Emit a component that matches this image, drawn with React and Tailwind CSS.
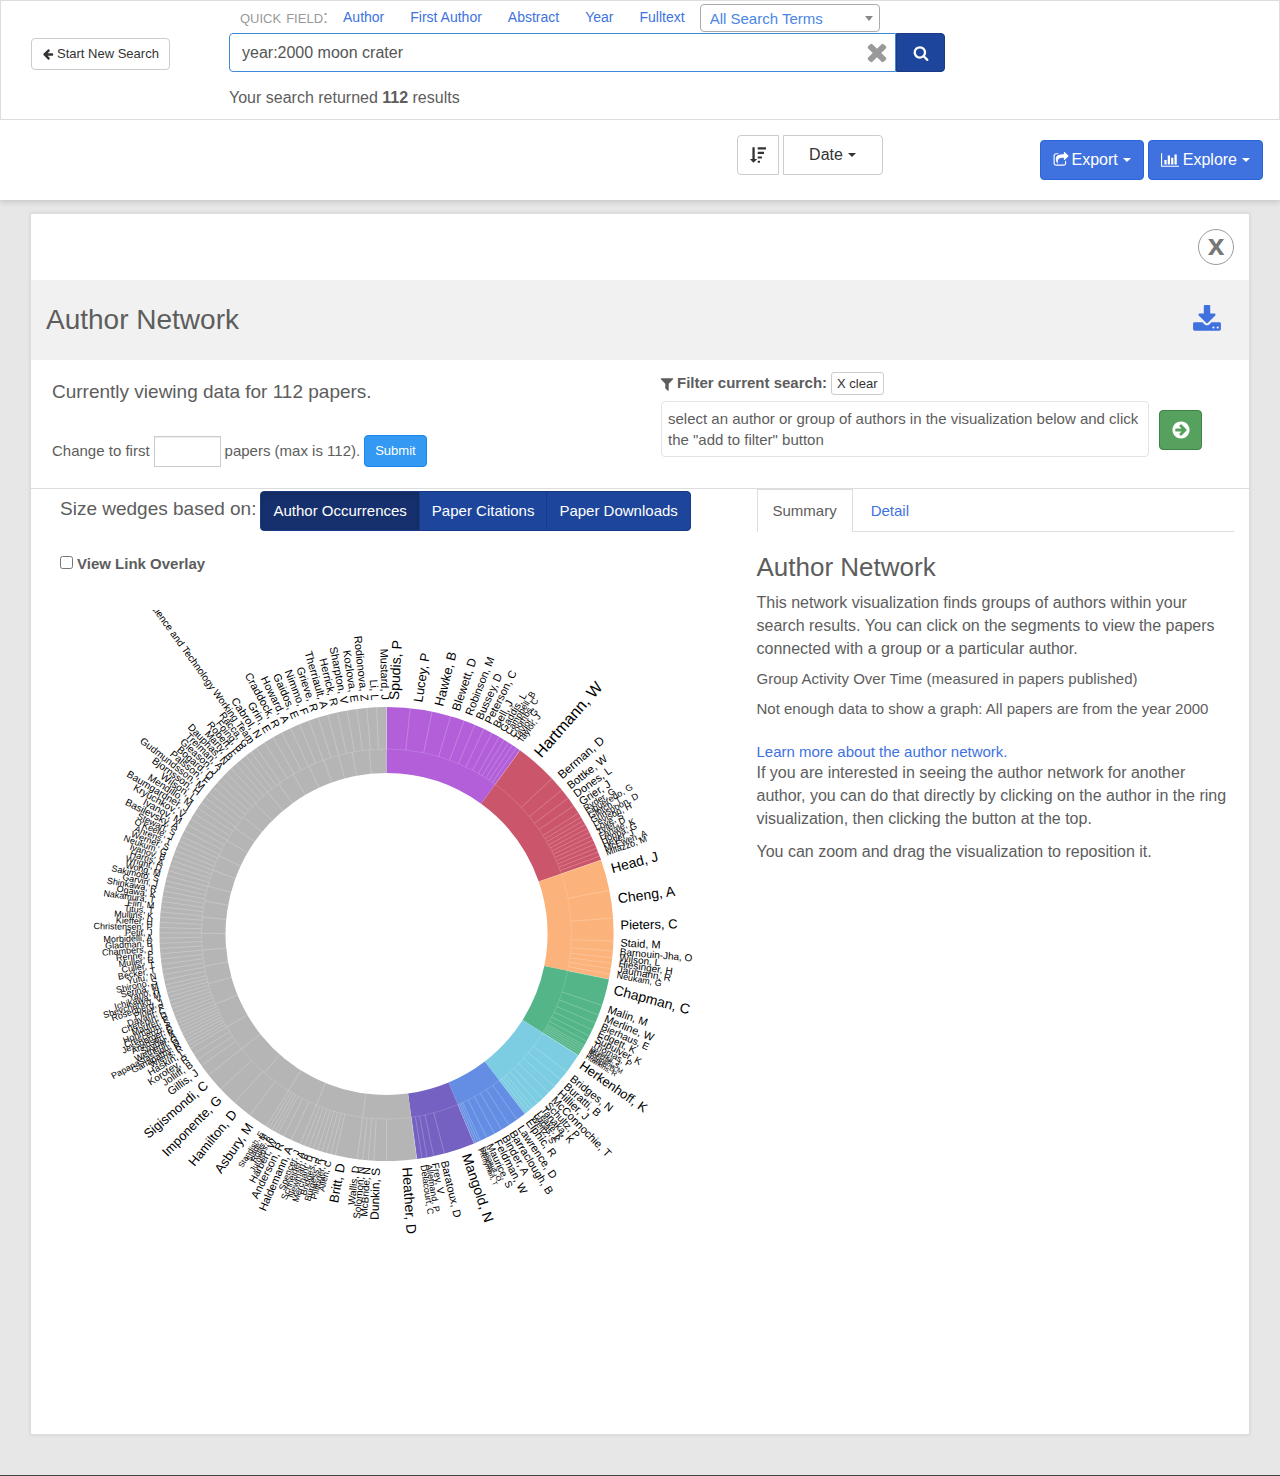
import React from "react";

const ICONS = {
  arrowLeft:
    "M1664 896v128q0 53-32.5 90.5t-84.5 37.5h-704l293 294q38 36 38 90t-38 90l-75 76q-37 37-90 37-52 0-91-37l-651-652q-37-37-37-90 0-52 37-91l651-650q38-38 91-38 52 0 90 38l75 74q38 38 38 91t-38 91l-293 293h704q52 0 84.5 37.5t32.5 90.5z",
  times:
    "M1490 1322q0 40-28 68l-136 136q-28 28-68 28t-68-28l-294-294-294 294q-28 28-68 28t-68-28l-136-136q-28-28-28-68t28-68l294-294-294-294q-28-28-28-68t28-68l136-136q28-28 68-28t68 28l294 294 294-294q28-28 68-28t68 28l136 136q28 28 28 68t-28 68l-294 294 294 294q28 28 28 68z",
  search:
    "M1216 832q0-185-131.5-316.5t-316.5-131.5-316.5 131.5-131.5 316.5 131.5 316.5 316.5 131.5 316.5-131.5 131.5-316.5zm512 832q0 52-38 90t-90 38q-54 0-90-38l-343-342q-179 124-399 124-143 0-273.5-55.5t-225-150-150-225-55.5-273.5 55.5-273.5 150-225 225-150 273.5-55.5 273.5 55.5 225 150 150 225 55.5 273.5q0 220-124 399l343 343q37 37 37 90z",
  filter:
    "M1595 295q17 41-14 70l-493 493v742q0 42-39 59-13 5-25 5-27 0-45-19l-256-256q-19-19-19-45v-486l-493-493q-31-29-14-70 17-39 59-39h1280q42 0 59 39z",
  arrowCircle:
    "M1413 896q0-27-18-45l-91-91-362-362q-18-18-45-18t-45 18l-91 91q-18 18-18 45t18 45l189 189h-502q-26 0-45 19t-19 45v128q0 26 19 45t45 19h502l-189 189q-18 18-18 45t18 45l91 91q18 18 45 18t45-18l362-362 91-91q18-18 18-45zm251 0q0 209-103 385.5t-279.5 279.5-385.5 103-385.5-103-279.5-279.5-103-385.5 103-385.5 279.5-279.5 385.5-103 385.5 103 279.5 279.5 103 385.5z",
  chart:
    "M640 896v512h-256v-512h256zm384-512v1024h-256v-1024h256zm1024 1152v128h-2048v-1536h128v1408h1920zm-640-896v768h-256v-768h256zm384-384v1152h-256v-1152h256z",
  share:
    "M1472 989v259q0 119-84.5 203.5t-203.5 84.5h-832q-119 0-203.5-84.5t-84.5-203.5v-832q0-119 84.5-203.5t203.5-84.5h255q13 0 22.5 9.5t9.5 22.5q0 27-26 32-77 26-133 60-10 4-16 4h-112q-66 0-113 47t-47 113v832q0 66 47 113t113 47h832q66 0 113-47t47-113v-214q0-19 18-29 28-13 54-37 16-16 35-8 21 9 21 29zm237-496l-384 384q-18 19-45 19-12 0-25-5-39-17-39-59v-192h-160q-323 0-438 131-119 137-74 473 3 23-20 34-8 2-12 2-16 0-26-13-10-14-21-31t-39.5-68.5-49.5-99.5-38.5-114-17.5-122q0-49 3.5-91t14-90 28-88 47-81.5 68.5-74 94.5-61.5 124.5-48.5 159.5-30.5 196.5-11h160v-192q0-42 39-59 13-5 25-5 26 0 45 19l384 384q19 19 19 45t-19 45z",
  download:
    "M1344 1344q0-26-19-45t-45-19-45 19-19 45 19 45 45 19 45-19 19-45zm256 0q0-26-19-45t-45-19-45 19-19 45 19 45 45 19 45-19 19-45zm128-224v320q0 40-28 68t-68 28h-1472q-40 0-68-28t-28-68v-320q0-40 28-68t68-28h465l135 136q58 56 136 56t136-56l136-136h464q40 0 68 28t28 68zm-325-569q17 41-14 70l-448 448q-18 19-45 19t-45-19l-448-448q-31-29-14-70 17-39 59-39h256v-448q0-26 19-45t45-19h256q26 0 45 19t19 45v448h256q42 0 59 39z",
  sortDesc:
    "M768 1376q0 10-10 24l-342 343q-10 9-23 9-12 0-23-9l-343-344q-15-16-7-35 8-20 30-20h220v-1280q0-14 9-23t23-9h192q14 0 23 9t9 23v1280h212q14 0 23 9t9 23zM896 32h864q32 0 32 32v176q0 32-32 32h-864q-32 0-32-32v-176q0-32 32-32zM896 544h640q32 0 32 32v176q0 32-32 32h-640q-32 0-32-32v-176q0-32 32-32zM896 1056h416q32 0 32 32v176q0 32-32 32h-416q-32 0-32-32v-176q0-32 32-32zM896 1536h192q32 0 32 32v176q0 32-32 32h-192q-32 0-32-32v-176q0-32 32-32z",
};

function Icon({ name, className, wide }) {
  return (
    <svg
      aria-hidden="true"
      viewBox={wide ? "0 0 2048 1792" : "0 0 1792 1792"}
      fill="currentColor"
      className={`shrink-0 ${className}`}
    >
      <path d={ICONS[name]} />
    </svg>
  );
}

function Caret() {
  return (
    <svg aria-hidden="true" viewBox="0 0 8 4" fill="currentColor" className="ml-[5px] h-1 w-2 shrink-0">
      <path d="M0 0h8L4 4z" />
    </svg>
  );
}

/* Sectors run clockwise from the top; a leaf is [name, end angle]. */
const spread = (from, to, names) =>
  names.map((n, i) => [n, from + ((to - from) * (i + 1)) / names.length]);

const GROUPS = [
  {
    color: "#b25fd9",
    leaves: [
      ["Spudis, P", 6], ["Lucey, P", 11.6], ["Hawke, B", 16.4], ["Blewett, D", 20],
      ["Robinson, M", 22.9], ["Bussey, D", 25.4], ["Peterson, C", 27.7], ["Bell, J", 29.8],
      ["Gaddis, L", 31.2], ["Campbell, B", 32.5], ["Coombs, C", 33.7], ["Taylor, G", 34.9], ["Taylor, J", 36],
    ],
  },
  {
    color: "#cb566b",
    leaves: [
      ["Hartmann, W", 46.8], ["Berman, D", 50.6], ["Bottke, W", 53.2], ["Dones, L", 55.6],
      ["Grier, J", 57.8], ["Ryder, G", 59],
      ...spread(59, 71, ["Figueredo, G", "Glotch, T", "Grinspoon, D", "Levison, H", "Love, S", "Tyler, D", "Fanale, K", "Hoppa, G", "Heyer, J", "McEwen, A", "Milazzo, M"]),
    ],
  },
  {
    color: "#fbb27b",
    leaves: [
      ["Head, J", 78.9], ["Cheng, A", 86], ["Pieters, C", 91.8], ["Staid, M", 94.3],
      ["Barnouin-Jha, O", 96], ["Wilson, L", 97.4], ["Hiesinger, H", 98.8], ["Jaumann, R", 100.2], ["Neukam, G", 101.5],
    ],
  },
  {
    color: "#53b588",
    leaves: [
      ["Chapman, C", 108.3], ["Malin, M", 110.9], ["Merline, W", 113.1], ["Bierhaus, E", 115],
      ["Edgett, K", 116.7], ["Supulver, K", 118.2], ["Thomas, P", 119.4],
      ...spread(119.4, 122.3, ["Veverka, J", "Murchie, S", "Robinson, M", "Joseph, D", "Hawkins, R"]),
    ],
  },
  {
    color: "#7dcde2",
    leaves: [
      ["Herkenhoff, K", 127.4], ["Bridges, N", 129.9], ["Buratti, B", 132.2], ["Hillier, J", 134.4],
      ["McConnochie, T", 136.5], ["Schultz, P", 138.2], ["Tanaka, K", 139.7],
      ...spread(139.7, 142.4, ["Leake, K", "Lucas, K", "Weitz, S"]),
    ],
  },
  {
    color: "#648ee4",
    leaves: [
      ["Elphic, R", 144.9], ["Lawrence, D", 147.3], ["Barraclough, B", 149.5], ["Binder, A", 151.6],
      ["Feldman, W", 153.8], ["Maurice, S", 155.6],
      ...spread(155.6, 157.3, ["Gasnault, O", "Genetay, I", "Prettyman, T"]),
    ],
  },
  {
    color: "#7461c2",
    leaves: [["Mangold, N", 165.2], ["Baratoux, D", 168], ["Frey, V", 169.7], ["Allemand, P", 171], ["Delacourt, C", 172.3]],
  },
  {
    color: "#b5b5b5",
    leaves: [
      ["Heather, D", 180], ["Dunkin, S", 183.2],
      ...spread(183.2, 187.4, ["McBride, N", "Solomon, N", "Wallis, D"]),
      ["Britt, D", 193],
      ...spread(193, 202.3, ["Allen, C", "Pillinger, J", "Burgess, R", "Bridges, J", "Merchant, D", "Newman, B", "Schneider, A", "Spencer, J"]),
      ["Haldemann, A", 204.8], ["Anderson, R", 207], ["Harbert, W", 208.6],
      ...spread(208.6, 212, ["Jurgens, R", "Rojas, F", "Slade, M", "Standish, E"]),
      ["Asbury, M", 217], ["Hamilton, D", 222], ["Imponente, G", 226.9], ["Sigismondi, C", 231.6],
      ["Gillis, J", 234.6], ["Jolliff, B", 236.4], ["Korotev, R", 238.1], ["Haskin, L", 239.8],
      ...spread(239.8, 247.7, ["Wiens, R", "Ganapathy, R", "Papanastassiou, D", "Wetherill, G", "Snyder, A", "Arvidson, R", "Jessberger, E", "Crescenzi, A", "Hohmann, S"]),
      ...spread(247.7, 257, ["Maurer, P", "Cherepin, D", "Davant, C", "Pinet, P", "Rosenberg, J", "Shevchenko, V", "Ichikawa, M", "Yano, H", "Serina, M"]),
      ...spread(257, 270.3, ["Shirono, S", "Yufu, N", "Becker, T", "Culler, T", "Muller, R", "Renne, P", "Chambers, J", "Gladman, B", "Morbidelli, A", "Petit, J"]),
      ...spread(270.3, 295.5, ["Christensen, P", "Kieffer, H", "Mullins, K", "Titus, T", "Fiiri, M", "Nakamura, T", "Ogawa, K", "Shinkawa, R", "Garvin, J", "Sakimoto, S", "Wong, M", "Wright, D", "Harris, A", "Ivanov, B", "Neukum, G", "Werner, S", "Ahrens, T", "O'Keefe, J", "Stewart, S"]),
      ...spread(295.5, 325, ["Basilevsky, A", "Ivanov, M", "Kryuchkov, V", "Baumgardner, J", "Mendillo, M", "Wilson, L", "Bjornsson, H", "Gudmundsson, M", "Palsson, F", "Bogard, D", "Gleason, J", "Treiman, A", "Dauphas, N", "Marty, B", "Robert, F", "Foing, B", "Racca, G", "Smart-1 Science and Technology Working Team"]),
      ...spread(325, 360, ["Cabrol, N", "Grin, E", "Craddock, R", "Howard, A", "Gaidos, E", "Nimmo, F", "Grieve, R", "Therriault, A", "Herrick, R", "Sharpton, V", "Kozlova, E", "Rodionova, Z", "Li, L", "Mustard, J"]),
    ],
  },
];

const INNER_SPLITS = [
  187.4, 202.3, 212, 221.4, 231.6, 239.8, 247.7, 254.4, 260, 265, 270.2, 275.2, 280.3, 285, 290.2,
  295, 300.3, 305, 309.3, 314.8, 320, 324.3, 329.7, 335.2, 340.2, 345, 349.3, 354.6,
];

const R_IN = 161;
const R_MID = 185;
const R_OUT = 227;
const R_TEXT = 234;

const point = (r, deg) => {
  const a = (deg * Math.PI) / 180;
  return [(r * Math.sin(a)).toFixed(2), (-r * Math.cos(a)).toFixed(2)];
};

const sector = (from, to) => {
  const large = to - from > 180 ? 1 : 0;
  return `M${point(R_OUT, from)}A${R_OUT} ${R_OUT} 0 ${large} 1 ${point(R_OUT, to)}L${point(R_IN, to)}A${R_IN} ${R_IN} 0 ${large} 0 ${point(R_IN, from)}Z`;
};

const labelSize = (span) => (span < 0.8 ? 7 : Math.round(8.8 * Math.pow(span, 0.24)));

function Spoke({ deg, from, to }) {
  const [x1, y1] = point(from, deg);
  const [x2, y2] = point(to, deg);
  return <line x1={x1} y1={y1} x2={x2} y2={y2} stroke="#fff" strokeWidth="1" strokeOpacity="0.22" />;
}

function Wheel() {
  let start = 0;
  const sectors = [];
  const leaves = [];
  GROUPS.forEach((g) => {
    const from = start;
    g.leaves.forEach(([name, end]) => {
      leaves.push({ name, from: start, to: end });
      start = end;
    });
    sectors.push({ color: g.color, from, to: start });
  });
  return (
    <svg role="img" aria-label="Author network wheel" viewBox="0 0 653 650" className="block h-auto w-full max-w-[653px] overflow-hidden">
      <g transform="translate(326.5 324)">
        {sectors.map((s) => (
          <path key={s.color} d={sector(s.from, s.to)} fill={s.color} />
        ))}
        <circle r={R_MID} fill="none" stroke="#fff" strokeOpacity="0.15" />
        {leaves.map((l, i) => (
          <Spoke key={i} deg={l.to} from={R_MID} to={R_OUT} />
        ))}
        {INNER_SPLITS.map((d) => (
          <Spoke key={d} deg={d} from={R_IN} to={R_MID} />
        ))}
        {leaves.map((l, i) => {
          const mid = (l.from + l.to) / 2;
          const flip = mid > 180;
          return (
            <text
              key={i}
              fontSize={labelSize(l.to - l.from)}
              fill="#000"
              textAnchor={flip ? "end" : "start"}
              transform={`rotate(${mid - 90}) translate(${R_TEXT} 0)${flip ? " rotate(180)" : ""}`}
            >
              {l.name}
            </text>
          );
        })}
      </g>
    </svg>
  );
}

const link = "text-[#4072df]";

function Header() {
  return (
    <header className="relative bg-white shadow-[0_2px_6px_rgba(0,0,0,0.15)]">
      <div className="flex h-[120px] border border-[#ddd] pl-[30px]">
        <div className="w-[198px] shrink-0 pt-[37px]">
          <button className="flex h-8 items-center gap-[3px] rounded border border-[#ccc] px-2.5 text-[13px] text-[#333]">
            <Icon name="arrowLeft" className="size-3" />
            Start New Search
          </button>
        </div>
        <div className="w-full max-w-[716px] pt-[3px]">
          <div className="flex h-[29px] items-start pl-[11px] text-sm leading-[26px]">
            <span className="mr-[15px] text-lg leading-[26px] text-[#999] [font-variant:small-caps]">quick field:</span>
            <nav className={`flex gap-[26px] whitespace-nowrap ${link}`}>
              <a href="#author">Author</a>
              <a href="#first">First Author</a>
              <a href="#abstract">Abstract</a>
              <a href="#year">Year</a>
              <a href="#fulltext">Fulltext</a>
            </nav>
            <div className="relative ml-[15px] w-[180px]">
              <select aria-label="All Search Terms" className="block h-7 w-full appearance-none rounded border border-[#aaa] bg-white px-[9px] pt-px text-[15px] text-[#4a86e4]">
                <option>All Search Terms</option>
              </select>
              <svg aria-hidden="true" viewBox="0 0 8 5" className="pointer-events-none absolute top-[12px] right-[7px] h-[5px] w-2" fill="#888">
                <path d="M0 0h8L4 5z" />
              </svg>
            </div>
          </div>
          <form className="flex h-[39px]">
            <div className="relative flex-1">
              <input
                aria-label="Search"
                defaultValue="year:2000 moon crater"
                className="h-full w-full rounded-l border border-[#3f8ad8] bg-white px-3 text-base text-[#555] outline-none"
              />
              <button type="button" aria-label="Clear" className="absolute top-[5px] right-[5px] text-[#999]">
                <Icon name="times" className="size-7" />
              </button>
            </div>
            <button type="button" aria-label="Run search" className="flex w-[49px] items-center justify-center rounded-r border border-[#193b85] bg-[#1c459b] text-white">
              <Icon name="search" className="size-4" />
            </button>
          </form>
          <p className="pt-3.5 text-base">
            Your search returned <b>112</b> results
          </p>
        </div>
      </div>
      <div className="flex h-20 items-start justify-end pr-[17px]">
        <div className="mt-[15px] mr-[157px] flex gap-1 text-[#333]">
          <button aria-label="Sort direction" className="flex h-10 w-[42px] items-center justify-center rounded-l border border-[#ccc]">
            <Icon name="sortDesc" className="size-4" />
          </button>
          <button className="flex h-10 w-[100px] items-center justify-center rounded-r border border-[#ccc] text-base">
            Date
            <Caret />
          </button>
        </div>
        <div className="mt-5 flex gap-1 text-base text-white">
          <button className="flex h-10 items-center rounded border border-[#2b63da] bg-[#4072df] px-3">
            <Icon name="share" className="mr-[3px] size-4" />
            Export
            <Caret />
          </button>
          <button className="flex h-10 items-center rounded border border-[#2b63da] bg-[#4072df] px-3">
            <Icon name="chart" wide className="mr-1 h-4 w-[18px]" />
            Explore
            <Caret />
          </button>
        </div>
      </div>
    </header>
  );
}

function Controls() {
  return (
    <section className="grid h-[129px] grid-cols-2 border-b border-[#ddd] text-[15px]">
      <div className="pl-[21px]">
        <p className="pt-[18px] text-[19px] leading-7">Currently viewing data for 112 papers.</p>
        <div className="mt-[29px] flex items-center gap-1">
          <label htmlFor="count">Change to first</label>
          <input id="count" className="h-[31px] w-[67px] border border-[#ccc] shadow-[inset_0_1px_1px_rgba(0,0,0,0.075)] outline-none" />
          <span>papers (max is 112).</span>
          <button className="h-8 rounded border border-[#1a87ef] bg-[#3399f3] px-2.5 text-[13px] text-white">Submit</button>
        </div>
      </div>
      <div className="pt-3 pr-[47px] pl-[21px]">
        <div className="flex items-center">
          <Icon name="filter" className="-ml-0.5 mr-0.5 size-4" />
          <b className="mr-1">Filter current search:</b>
          <button className="h-[23px] rounded-[3px] border border-[#ccc] px-[5px] text-[13px] text-[#333]">X clear</button>
        </div>
        <div className="mt-1.5 flex items-center gap-2.5">
          <p className="flex-1 rounded border border-[#e3e3e3] px-1.5 py-[6px] leading-[21px]">
            select an author or group of authors in the visualization below and click the "add to filter" button
          </p>
          <button aria-label="Add to filter" className="mt-0.5 flex h-10 w-[43px] items-center justify-center rounded border border-[#3f8348] bg-[#55a15d] text-white">
            <Icon name="arrowCircle" className="size-5" />
          </button>
        </div>
      </div>
    </section>
  );
}

function Visualization() {
  const base = "h-10 border border-[#193b85] px-3 text-[15px] text-white";
  return (
    <section className="col-span-7 pt-0.5 pl-[29px]">
      <div className="flex items-start gap-1 whitespace-nowrap">
        <h2 className="text-[19px] leading-9">Size wedges based on:</h2>
        <div className="flex">
          <button className={`${base} rounded-l bg-[#15306c] shadow-[inset_0_3px_5px_rgba(0,0,0,0.125)]`}>Author Occurrences</button>
          <button className={`${base} -ml-px bg-[#1c459b]`}>Paper Citations</button>
          <button className={`${base} -ml-px rounded-r bg-[#1c459b]`}>Paper Downloads</button>
        </div>
      </div>
      <label className="mt-[22px] flex items-center gap-1 text-[15px] font-bold">
        <input type="checkbox" className="-mt-1 size-[13px]" />
        View Link Overlay
      </label>
      <div className="mt-[34px]">
        <Wheel />
      </div>
    </section>
  );
}

function Summary() {
  return (
    <section className="col-span-5 px-[15px]">
      <div role="tablist" className="flex h-[43px] border-b border-[#ddd] text-[15px]">
        <button role="tab" aria-selected="true" className="h-[43px] border border-b-0 border-[#ddd] bg-white px-[15px]">
          Summary
        </button>
        <button role="tab" aria-selected="false" className={`h-[43px] border border-b-0 border-transparent px-[17px] ${link}`}>
          Detail
        </button>
      </div>
      <h2 className="mt-5 text-[26px] leading-[30px]">Author Network</h2>
      <p className="mt-[9px] text-base leading-[23px]">
        This network visualization finds groups of authors within your search results. You can click on the segments to view the papers connected with a group or a particular author.
      </p>
      <p className="mt-2 text-[15px] leading-[21px]">Group Activity Over Time (measured in papers published)</p>
      <p className="mt-[9px] text-[15px] leading-[21px]">Not enough data to show a graph: All papers are from the year 2000</p>
      <a href="#about" className={`mt-6 block text-[15px] leading-[18px] ${link}`}>
        Learn more about the author network.
      </a>
      <p className="text-base leading-[23px]">
        If you are interested in seeing the author network for another author, you can do that directly by clicking on the author in the ring visualization, then clicking the button at the top.
      </p>
      <p className="mt-2.5 text-base leading-[23px]">You can zoom and drag the visualization to reposition it.</p>
    </section>
  );
}

export default function App() {
  return (
    <div className="border-b border-[#444] bg-[#e7e7e7] pb-10 font-['Liberation_Sans',Arial,sans-serif] text-[#5d5d5d]">
      <Header />
      <main className="mx-[30px] mt-[13px] border border-[#ddd] bg-white pb-[174px] shadow-[0_0_3px_rgba(0,0,0,0.1)]">
        <div className="flex h-[66px] items-start justify-end px-[15px] pt-[15px]">
          <button aria-label="Close" className="flex size-9 items-center justify-center rounded-full border border-[#999] pb-1 text-[30px] leading-none font-bold text-[#777]">
            x
          </button>
        </div>
        <div className="flex h-20 items-center justify-between bg-[#f1f1f1] pr-[27px] pl-[15px]">
          <h1 className="text-[28px]">Author Network</h1>
          <button aria-label="Download" className={link}>
            <Icon name="download" className="size-[30px]" />
          </button>
        </div>
        <Controls />
        <div className="grid grid-cols-12">
          <Visualization />
          <Summary />
        </div>
      </main>
    </div>
  );
}
